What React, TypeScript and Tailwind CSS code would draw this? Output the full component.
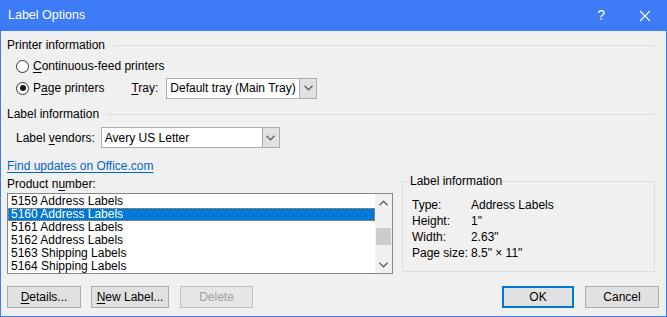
import React from 'react';

const font = { fontFamily: '"Liberation Sans", Arial, sans-serif' };

const Chevron = ({ up = false, className = '' }: { up?: boolean; className?: string }) => (
  <svg width="9" height="6" viewBox="0 0 9 6" className={className}>
    <path
      d={up ? 'M0.5 5.2 L4.5 1.2 L8.5 5.2' : 'M0.5 0.8 L4.5 4.8 L8.5 0.8'}
      fill="none"
      stroke="currentColor"
      strokeWidth="1.3"
    />
  </svg>
);

const GroupHeader = ({ title, className = '' }: { title: string; className?: string }) => (
  <div className={`flex items-center h-[14px] ${className}`}>
    <span className="leading-[14px]">{title}</span>
    <div className="flex-1 h-px bg-[#dcdcdc] ml-[8px] mr-[4px]" />
  </div>
);

const Radio = ({ checked, children }: { checked?: boolean; children: React.ReactNode }) => (
  <div className="flex items-center">
    <span className="w-[13px] h-[13px] rounded-full border border-[#333] bg-white flex items-center justify-center">
      {checked && <span className="w-[6px] h-[6px] rounded-full bg-[#1a1a1a]" />}
    </span>
    <span className="ml-[4px]">{children}</span>
  </div>
);

const Select = ({ value, className = '' }: { value: string; className?: string }) => (
  <div className={`flex h-[21px] border border-[#adadad] bg-white ${className}`}>
    <div className="flex-1 flex items-center pl-[3px] leading-none">{value}</div>
    <div className="w-[17px] bg-[#e1e1e1] border-l border-[#adadad] flex items-center justify-center text-[#606060]">
      <Chevron />
    </div>
  </div>
);

const Button = ({
  children,
  className = '',
  disabled = false,
  primary = false,
}: {
  children: React.ReactNode;
  className?: string;
  disabled?: boolean;
  primary?: boolean;
}) => (
  <div
    className={`h-[22px] flex items-center justify-center bg-[#e1e1e1] ${
      primary ? 'border-2 border-[#0078d7]' : disabled ? 'border border-[#bfbfbf]' : 'border border-[#adadad]'
    } ${disabled ? 'text-[#a0a0a0] bg-[#e6e6e6]' : 'text-black'} ${className}`}
  >
    {children}
  </div>
);

const products = [
  '5159 Address Labels',
  '5160 Address Labels',
  '5161 Address Labels',
  '5162 Address Labels',
  '5163 Shipping Labels',
  '5164 Shipping Labels',
];

const info = [
  ['Type:', 'Address Labels'],
  ['Height:', '1"'],
  ['Width:', '2.63"'],
  ['Page size:', '8.5" \u00d7 11"'],
];

export default function App() {
  return (
    <div
      style={font}
      className="w-[667px] h-[317px] bg-[#f0f0f0] border-x border-b border-[#3d7bf7] text-[12px] text-black flex flex-col overflow-hidden"
    >
      {/* title bar */}
      <div className="h-[31px] bg-[#3d7bf7] text-white flex items-center shrink-0 -mx-px">
        <span className="ml-[8px] text-[12.5px]">Label Options</span>
        <span className="ml-auto text-[14px] mr-[34px]">?</span>
        <svg width="12" height="12" viewBox="0 0 12 12" className="mr-[16px]">
          <path d="M1 1 L11 11 M11 1 L1 11" stroke="white" strokeWidth="1.1" />
        </svg>
      </div>

      <div className="pl-[6px] pr-[7px] flex flex-col">
        <GroupHeader title="Printer information" className="mt-[7px]" />

        <div className="h-[20px] mt-[4px] ml-[9px] flex items-center">
          <Radio>
            <span className="underline underline-offset-2">C</span>ontinuous-feed printers
          </Radio>
        </div>

        <div className="h-[22px] mt-px ml-[9px] flex items-center">
          <Radio checked>
            P<span className="underline underline-offset-2">a</span>ge printers
          </Radio>
          <span className="ml-[27px]">
            <span className="underline underline-offset-2">T</span>ray:
          </span>
          <Select value="Default tray (Main Tray)" className="ml-[8px] w-[151px]" />
        </div>

        <GroupHeader title="Label information" className="mt-[8px]" />

        <div className="h-[21px] mt-[6px] ml-[9px] flex items-center">
          <span>
            Label <span className="underline underline-offset-2">v</span>endors:
          </span>
          <Select value="Avery US Letter" className="ml-[6px] w-[179px]" />
        </div>

        <div className="h-[14px] mt-[11px] flex items-center">
          <span className="text-[#0066cc] underline underline-offset-2">Find updates on Office.com</span>
        </div>

        <div className="flex mt-[4px]">
          {/* left column */}
          <div className="w-[386px] flex flex-col">
            <div className="h-[14px] flex items-center">
              Product n<span className="underline underline-offset-2">u</span>mber:
            </div>
            <div className="mt-[2px] h-[81px] border border-[#828790] bg-white flex">
              <div className="flex-1 pt-px">
                {products.map((p, i) => (
                  <div
                    key={p}
                    className={`h-[13px] leading-[13px] pl-[3px] ${
                      i === 1 ? 'bg-[#0078d7] text-white outline-1 outline-dotted outline-[#e8912e] -outline-offset-1' : ''
                    }`}
                  >
                    {p}
                  </div>
                ))}
              </div>
              <div className="w-[17px] bg-[#f0f0f0] flex flex-col items-center text-[#606060]">
                <div className="h-[17px] flex items-center justify-center">
                  <Chevron up />
                </div>
                <div className="mt-[17px] w-[15px] h-[17px] bg-[#cdcdcd]" />
                <div className="mt-auto h-[17px] flex items-center justify-center">
                  <Chevron />
                </div>
              </div>
            </div>
            <div className="flex mt-[12px]">
              <Button className="w-[74px]">
                <span className="underline underline-offset-2">D</span>etails...
              </Button>
              <Button className="w-[78px] ml-[10px]">
                <span className="underline underline-offset-2">N</span>ew Label...
              </Button>
              <Button className="w-[73px] ml-[11px]" disabled>
                Delete
              </Button>
            </div>
          </div>

          {/* right column */}
          <div className="flex-1 flex flex-col ml-[9px]">
            <div className="relative mt-[4px] mr-[4px] h-[91px] border border-[#dcdcdc]">
              <span className="absolute -top-[8px] left-[7px] bg-[#f0f0f0] leading-[14px]">Label information</span>
              <div className="pt-[15px] pl-[9px]">
                {info.map(([k, v]) => (
                  <div key={k} className="flex h-[16px] items-center">
                    <span className="w-[59px]">{k}</span>
                    <span>{v}</span>
                  </div>
                ))}
              </div>
            </div>
            <div className="flex justify-end mt-[14px]">
              <Button primary className="w-[72px]">
                OK
              </Button>
              <Button className="w-[74px] ml-[11px]">Cancel</Button>
            </div>
          </div>
        </div>
      </div>
    </div>
  );
}
